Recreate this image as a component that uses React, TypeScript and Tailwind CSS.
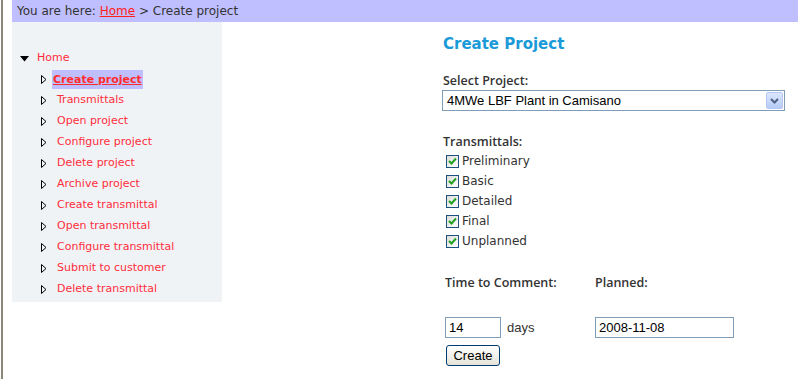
import React from "react";

const items = [
  "Create project",
  "Transmittals",
  "Open project",
  "Configure project",
  "Delete project",
  "Archive project",
  "Create transmittal",
  "Open transmittal",
  "Configure transmittal",
  "Submit to customer",
  "Delete transmittal",
];

function RightTri() {
  return (
    <svg width="6" height="9" viewBox="0 0 6 9" className="block">
      <path d="M0.5 0.5 L5 4.5 L0.5 8.5 Z" fill="none" stroke="#000" strokeWidth="1" />
    </svg>
  );
}

function DownTri() {
  return (
    <svg width="9" height="6" viewBox="0 0 9 6" className="block">
      <path d="M0 0 L9 0 L4.5 5.5 Z" fill="#000" />
    </svg>
  );
}

function Check({ label }: { label: string }) {
  return (
    <div className="flex h-[20px] items-center">
      <div className="ml-[4px] flex h-[13px] w-[13px] items-center justify-center border border-[#1c5180] bg-gradient-to-br from-[#dcdcd7] to-white">
        <svg width="9" height="8" viewBox="0 0 9 8">
          <path d="M1 4 L3.5 6.5 L8 1.5" fill="none" stroke="#21a121" strokeWidth="2" />
        </svg>
      </div>
      <span className="ml-[3px] text-[12px] text-[#333]">{label}</span>
    </div>
  );
}

const labelFont = { fontFamily: '"Open Sans", "DejaVu Sans", sans-serif' };

export default function App() {
  return (
    <div
      className="h-[379px] w-[798px] overflow-hidden bg-white pl-[1px]"
      style={{ fontFamily: '"DejaVu Sans", Verdana, sans-serif' }}
    >
      <div className="h-full border-l-2 border-[#8a8678] pl-[9px]">
        <div className="flex h-[22px] items-center bg-[#bfbfff] pl-[5px] text-[12px] text-[#333]">
          You are here:&nbsp;<span className="text-[#ff2020] underline">Home</span>&nbsp;&gt; Create project
        </div>
        <div className="flex">
          <div className="h-[280px] w-[210px] shrink-0 bg-[#f0f3f6] pt-[26px] text-[11px]">
            <div className="flex h-[21px] items-center pl-[8px]">
              <DownTri />
              <span className="ml-[8px] text-[#ff2d3c]">Home</span>
            </div>
            {items.map((it, i) => (
              <div key={it} className="flex h-[21px] items-center pl-[29px]">
                <RightTri />
                {i === 0 ? (
                  <span className="ml-[5px] bg-[#bfbfff] px-[1px] leading-[19px] font-bold text-[#ff2d2d] underline">
                    {it}
                  </span>
                ) : (
                  <span className="ml-[10px] text-[#ff2d3c]">{it}</span>
                )}
              </div>
            ))}
          </div>
          <div className="ml-[220px] flex flex-col pt-[12px]">
            <div className="h-[20px] pl-[1px] text-[15px] leading-[20px] font-bold text-[#1b9ad8]">Create Project</div>
            <div className="mt-[19px] h-[16px] pl-[1px] text-[12.5px] leading-[16px] font-semibold text-[#333]" style={labelFont}>
              Select Project:
            </div>
            <div
              className="mt-[1px] flex h-[21px] w-[343px] items-center border border-[#7f9db9] bg-white pl-[4px] text-[13px] text-black"
              style={{ fontFamily: '"Liberation Sans", Arial, sans-serif' }}
            >
              <span className="flex-1">4MWe LBF Plant in Camisano</span>
              <div className="mr-[1px] flex h-[17px] w-[17px] items-center justify-center rounded-[2px] border border-[#b5c8f5] bg-gradient-to-b from-[#dce6fd] to-[#b7cbf7]">
                <svg width="9" height="6" viewBox="0 0 9 6">
                  <path d="M1 1 L4.5 4.5 L8 1" fill="none" stroke="#4d6185" strokeWidth="2" />
                </svg>
              </div>
            </div>
            <div className="mt-[23px] h-[16px] pl-[1px] text-[12.5px] leading-[16px] font-semibold text-[#333]" style={labelFont}>
              Transmittals:
            </div>
            <div className="mt-[1px]">
              <Check label="Preliminary" />
              <Check label="Basic" />
              <Check label="Detailed" />
              <Check label="Final" />
              <Check label="Unplanned" />
            </div>
            <div className="mt-[24px] flex h-[16px] text-[12.5px] leading-[16px] font-semibold text-[#333]" style={labelFont}>
              <span className="ml-[3px] w-[150px]">Time to Comment:</span>
              <span>Planned:</span>
            </div>
            <div
              className="mt-[26px] flex h-[21px] items-center text-[13px] text-black"
              style={{ fontFamily: '"Liberation Sans", Arial, sans-serif' }}
            >
              <div className="ml-[3px] flex h-[21px] w-[56px] items-center border border-[#7f9db9] pl-[3px]">14</div>
              <span className="ml-[6px] w-[88px] text-[#333]">days</span>
              <div className="flex h-[21px] w-[139px] items-center border border-[#7f9db9] pl-[3px]">2008-11-08</div>
            </div>
            <div className="mt-[7px] flex">
              <button
                className="ml-[4px] block h-[21px] w-[54px] rounded-[3px] border border-[#003c74] bg-gradient-to-b from-white to-[#e6e4d8] text-[13px] leading-[19px] text-black"
                style={{ fontFamily: '"Liberation Sans", Arial, sans-serif' }}
              >
                Create
              </button>
            </div>
          </div>
        </div>
      </div>
    </div>
  );
}
